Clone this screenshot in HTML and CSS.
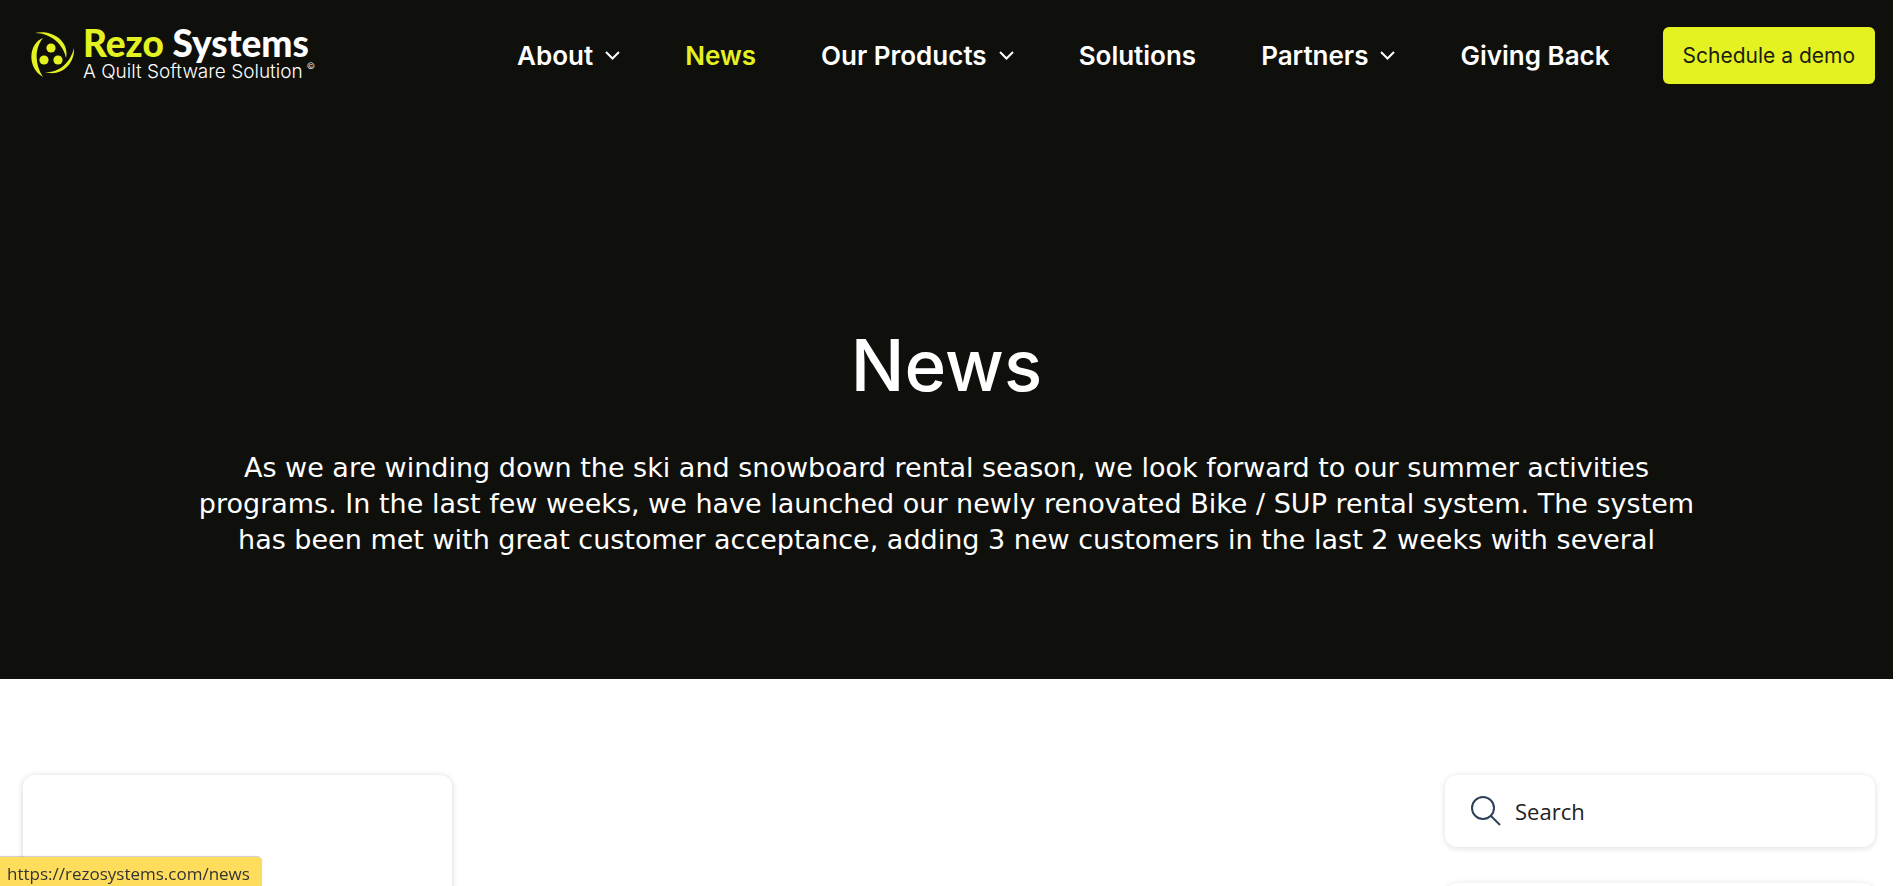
FILE: index.html
```html
<!DOCTYPE html>
<html lang="en">
<head>
<meta charset="utf-8">
<title>News | Rezo Systems</title>
<meta name="viewport" content="width=device-width, initial-scale=1">
<link rel="stylesheet" href="styles.css">
</head>
<body>
<div class="page">
  <div class="hero">
    <header class="header">
      <a class="logo" href="#" aria-label="Rezo Systems">
        <svg class="logo-mark" viewBox="0 0 44 46" aria-hidden="true">
          <path d="M4 2C18-2 39 8 35 27C33 15 21 2 4 2Z"/>
          <path d="M12 7C-2 12-5 36 12 46C4 34 3 18 12 7Z"/>
          <path d="M43 17C44 34 29 46 14 41C27 42 39 33 43 17Z"/>
          <circle cx="20" cy="17" r="4.6"/>
          <circle cx="13" cy="29" r="4.6"/>
          <circle cx="27" cy="29" r="4.6"/>
        </svg>
        <span class="logo-text">
          <span class="logo-name"><span class="accent">Rezo</span> Systems</span>
          <span class="logo-tagline">A Quilt Software Solution<span class="logo-mark-c">©</span></span>
        </span>
      </a>
      <nav class="nav" aria-label="Main">
        <a href="#">About <svg class="chevron" viewBox="0 0 15 9" aria-hidden="true"><path d="M1 1l6.500 6.500L14 1"/></svg></a>
        <a class="accent" href="#" aria-current="page">News</a>
        <a href="#">Our Products <svg class="chevron" viewBox="0 0 15 9" aria-hidden="true"><path d="M1 1l6.500 6.500L14 1"/></svg></a>
        <a href="#">Solutions</a>
        <a href="#">Partners <svg class="chevron" viewBox="0 0 15 9" aria-hidden="true"><path d="M1 1l6.500 6.500L14 1"/></svg></a>
        <a href="#">Giving Back</a>
      </nav>
      <a class="demo" href="#">Schedule a demo</a>
    </header>
    <section class="intro">
      <h1>News</h1>
      <p>As we are winding down the ski and snowboard rental season, we look forward to our summer activities<br>programs. In the last few weeks, we have launched our newly renovated Bike / SUP rental system. The system<br>has been met with great customer acceptance, adding 3 new customers in the last 2 weeks with several</p>
    </section>
  </div>
  <main class="content">
    <article class="card post"></article>
    <aside class="sidebar">
      <label class="card search">
        <svg class="search-icon" viewBox="0 0 30 30" aria-hidden="true"><circle cx="12" cy="12" r="11"/><path d="M20 20l9 9"/></svg>
        <input type="search" placeholder="Search" aria-label="Search">
      </label>
      <div class="card panel"></div>
    </aside>
  </main>
</div>
<div class="status">https://rezosystems.com/news</div>
</body>
</html>
```

FILE: styles.css
```css
* { box-sizing: border-box; }
body { margin: 0; background: #fff; color: #212121; font-family: "Open Sans", sans-serif; }
a { color: inherit; text-decoration: none; }
.page { height: 100vh; overflow: hidden; padding-right: 3px; }
.hero { background: #0f100b; color: #fff; padding: 27px 0 121px; }
.accent { color: #e4f222; }
.header { display: flex; align-items: center; height: 57px; padding: 0 18px 0 31px; }
.logo { display: flex; align-items: center; gap: 8px; padding-bottom: 3px; }
.logo-mark { width: 44px; height: 46px; fill: #e4f222; }
.logo-text { display: flex; flex-direction: column; }
.logo-name { font: 900 37px/36px Lato, sans-serif; white-space: nowrap; }
.logo-tagline { display: flex; gap: 4px; font: 300 19px/22px Inter, sans-serif; white-space: nowrap; }
.logo-mark-c { font-size: 9px; line-height: 10px; }
.nav { display: flex; flex: 1; justify-content: flex-end; align-items: center; gap: 65px; margin-right: 53px; font: 600 26px/32px Inter, sans-serif; white-space: nowrap; }
.nav a { display: flex; align-items: center; gap: 12px; }
.chevron { width: 15px; height: 9px; fill: none; stroke: #fff; stroke-width: 2; }
.demo { display: flex; align-items: center; height: 57px; padding: 0 20px; border-radius: 6px; background: #e4f222; color: #1b1c12; font: 400 21px/28px Inter, sans-serif; white-space: nowrap; }
.intro { padding-top: 236px; text-align: center; }
.intro h1 { margin: 0 0 40px; font: 500 71px/90px Inter, sans-serif; }
.intro p { margin: 0; font: 400 27px/36px "DejaVu Sans", sans-serif; }
.content { display: flex; justify-content: space-between; align-items: flex-start; padding: 96px 18px 0 23px; }
.card { border-radius: 12px; background: #fff; box-shadow: 0 1px 6px rgba(0, 0, 0, .18); }
.post { width: 429px; height: 400px; }
.sidebar { display: flex; flex-direction: column; gap: 36px; width: 430px; }
.sidebar .card { box-shadow: 0 1px 6px rgba(0, 0, 0, .14); }
.search { display: flex; align-items: center; gap: 14px; height: 72px; padding: 0 26px; }
.search-icon { flex: none; width: 30px; height: 30px; fill: none; stroke: #2f4159; stroke-width: 2; }
.search input { flex: 1; min-width: 0; padding: 0; border: 0; outline: 0; background: none; color: #212121; font: 400 22px/30px "Open Sans", sans-serif; }
.search input::placeholder { color: #212121; opacity: 1; }
.panel { height: 200px; }
.status { position: fixed; left: 0; bottom: 0; padding: 4px 12px 0 7px; border-top-right-radius: 5px; background: #ffdd5c; box-shadow: 0 -1px 1px rgba(0, 0, 0, .2); color: #333; font: 400 17px/25px "Open Sans", sans-serif; }
```
